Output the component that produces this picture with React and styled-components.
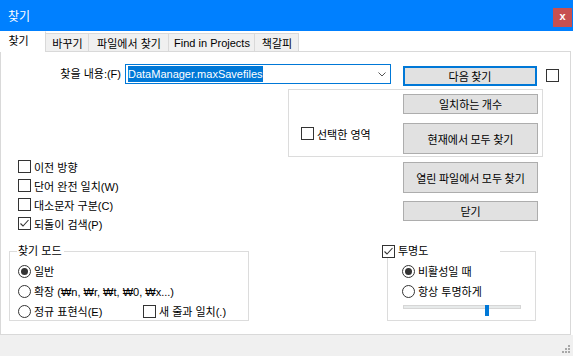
import React from 'react';
import styled, { createGlobalStyle } from 'styled-components';

const GlobalStyle = createGlobalStyle`
  html, body {
    margin: 0;
    padding: 0;
  }
  body {
    width: 573px;
    height: 356px;
    overflow: hidden;
    background: #f0f0f0;
    font-family: "Liberation Sans", "Noto Sans CJK KR", sans-serif;
    font-size: 11px;
    color: #000;
  }
  * {
    box-sizing: border-box;
  }
`;

const Window = styled.div`
  width: 573px;
  height: 356px;
  display: flex;
  flex-direction: column;
`;

const TitleBar = styled.div`
  height: 31px;
  flex: none;
  background: #0080ff;
  display: flex;
  align-items: flex-start;
  justify-content: space-between;
`;

const Title = styled.div`
  color: #fff;
  font-family: "Noto Sans CJK KR", sans-serif;
  font-size: 12px;
  line-height: 31px;
  padding-left: 8px;
`;

const CloseButton = styled.div`
  width: 19px;
  height: 19px;
  margin: 8px 1px 0 0;
  background: #c75050;
  color: #fff;
  font-weight: bold;
  font-size: 11px;
  line-height: 17px;
  text-align: center;
`;

const TabArea = styled.div`
  background: #fff;
  display: flex;
  flex-direction: column;
`;

const TabBar = styled.div`
  height: 20px;
  display: flex;
  align-items: flex-end;
`;

const Tab = styled.div`
  width: ${p => p.width}px;
  height: ${p => (p.active ? 21 : 18)}px;
  margin-bottom: ${p => (p.active ? -1 : 0)}px;
  position: relative;
  z-index: ${p => (p.active ? 1 : 0)};
  background: ${p => (p.active ? '#fff' : '#f0f0f0')};
  border-top: 1px solid ${p => (p.active ? '#fff' : '#d9d9d9')};
  border-right: 1px solid #d9d9d9;
  display: flex;
  align-items: center;
  justify-content: center;
  padding: ${p => (p.active ? '0 8px 4px 0' : '0 0 0 1px')};
  white-space: nowrap;
`;

const Panel = styled.div`
  width: 571px;
  height: 284px;
  background: #fff;
  border: 1px solid #d9d9d9;
  display: flex;
  flex-direction: column;
`;

const SearchRow = styled.div`
  display: flex;
  align-items: flex-start;
  margin-top: 12px;
`;

const FieldLabel = styled.div`
  width: 120px;
  line-height: 20px;
  text-align: right;
`;

const ComboBox = styled.div`
  width: 266px;
  height: 20px;
  margin-left: 4px;
  border: 1px solid #0078d7;
  display: flex;
  align-items: center;
`;

const Selection = styled.span`
  margin-left: 2px;
  background: #0078d7;
  color: #fff;
  line-height: 16px;
`;

const Chevron = styled.svg`
  margin-left: auto;
  margin-right: 4px;
`;

const Button = styled.div`
  width: ${p => p.width || 135}px;
  height: ${p => p.height || 20}px;
  margin-left: ${p => p.left || 0}px;
  margin-top: ${p => p.top || 0}px;
  background: #e1e1e1;
  border: ${p => (p.primary ? '2px solid #0078d7' : '1px solid #adadad')};
  display: flex;
  align-items: center;
  justify-content: center;
  font-family: "Noto Sans CJK KR", sans-serif;
`;

const BoxMark = styled.div`
  width: 13px;
  height: 13px;
  flex: none;
  background: #fff;
  border: 1px solid #333;
  border-radius: ${p => (p.round ? '50%' : '0')};
  margin-left: ${p => p.left || 0}px;
  margin-top: ${p => p.top || 0}px;
  display: flex;
  align-items: center;
  justify-content: center;
`;

const Dot = styled.div`
  width: 7px;
  height: 7px;
  border-radius: 50%;
  background: #333;
`;

const Option = styled.div`
  height: ${p => p.h || 19}px;
  display: flex;
  align-items: center;
  gap: 3px;
  white-space: nowrap;
`;

const OptionText = styled.span`
  width: ${p => (p.width ? `${p.width}px` : 'auto')};
`;

const SelectionGroup = styled.div`
  width: 255px;
  height: 68px;
  margin: 3px 0 0 287px;
  border: 1px solid #dcdcdc;
  display: flex;
`;

const SelectionLeft = styled.div`
  width: 114px;
  padding: 37px 0 0 12px;
`;

const ButtonColumn = styled.div`
  display: flex;
  flex-direction: column;
  gap: ${p => p.gap}px;
  padding-top: ${p => p.top}px;
`;

const MiddleRow = styled.div`
  display: flex;
`;

const OptionColumn = styled.div`
  width: 402px;
  padding-left: 17px;
`;

const BottomRow = styled.div`
  display: flex;
  margin-top: 18px;
`;

const GroupBox = styled.div`
  position: relative;
  width: ${p => p.width}px;
  height: 70px;
  margin-left: ${p => p.left}px;
  border: 1px solid #dcdcdc;
  padding: 9px 0 0 ${p => p.inset}px;
`;

const Caption = styled.div`
  position: absolute;
  top: -7px;
  left: ${p => p.left}px;
  width: ${p => (p.width ? `${p.width}px` : 'auto')};
  height: 13px;
  padding: 0 2px 0 ${p => (p.width ? 0 : 1)}px;
  background: #fff;
  display: flex;
  align-items: center;
  gap: 3px;
  line-height: 13px;
`;

const Slider = styled.div`
  position: relative;
  width: 118px;
  height: 11px;
  margin: 1px 0 0 1px;
`;

const Track = styled.div`
  margin-top: 4px;
  height: 4px;
  background: #e7eaea;
  border: 1px solid #d6d6d6;
`;

const Thumb = styled.div`
  position: absolute;
  top: 0;
  width: 4px;
  height: 11px;
  background: #0078d7;
`;

const Footer = styled.div`
  flex: 1;
  display: flex;
  justify-content: flex-end;
  align-items: flex-end;
  padding: 0 2px 2px 0;
`;

const Check = ({ checked, left, top }) => (
  <BoxMark left={left} top={top}>
    {checked && (
      <svg width="11" height="11" viewBox="0 0 11 11">
        <polyline points="1.5,5.5 4,8 9.5,2" fill="none" stroke="#333" strokeWidth="1.1" />
      </svg>
    )}
  </BoxMark>
);

const Radio = ({ checked }) => <BoxMark round>{checked && <Dot />}</BoxMark>;

const tabs = [
  { label: '찾기', width: 46, active: true },
  { label: '바꾸기', width: 43 },
  { label: '파일에서 찾기', width: 80 },
  { label: 'Find in Projects', width: 86 },
  { label: '책갈피', width: 44 },
];

const options = [
  { label: '이전 방향' },
  { label: '단어 완전 일치(W)' },
  { label: '대소문자 구분(C)' },
  { label: '되돌이 검색(P)', checked: true },
];

const Grip = () => (
  <svg width="10" height="10" viewBox="0 0 10 10">
    {[[7, 1], [4, 4], [7, 4], [1, 7], [4, 7], [7, 7]].map(([x, y]) => (
      <rect key={`${x}-${y}`} x={x} y={y} width="2" height="2" fill="#a8a8a8" />
    ))}
  </svg>
);

export default function App() {
  return (
    <Window>
      <GlobalStyle />
      <TitleBar>
        <Title>찾기</Title>
        <CloseButton>x</CloseButton>
      </TitleBar>
      <TabArea>
        <TabBar>
          {tabs.map(t => (
            <Tab key={t.label} width={t.width} active={t.active}>
              {t.label}
            </Tab>
          ))}
        </TabBar>
        <Panel>
          <SearchRow>
            <FieldLabel>찾을 내용:(F)</FieldLabel>
            <ComboBox>
              <Selection>DataManager.maxSavefiles</Selection>
              <Chevron width="8" height="5" viewBox="0 0 8 5">
                <polyline points="0.5,0.5 4,4 7.5,0.5" fill="none" stroke="#555" strokeWidth="1" />
              </Chevron>
            </ComboBox>
            <Button primary width={134} left={12} top={2}>다음 찾기</Button>
            <Check left={9} top={5} />
          </SearchRow>

          <SelectionGroup>
            <SelectionLeft>
              <Option h={13}>
                <Check />
                <span>선택한 영역</span>
              </Option>
            </SelectionLeft>
            <ButtonColumn gap={9} top={4}>
              <Button>일치하는 개수</Button>
              <Button height={31}>현재에서 모두 찾기</Button>
            </ButtonColumn>
          </SelectionGroup>

          <MiddleRow>
            <OptionColumn>
              {options.map(o => (
                <Option key={o.label}>
                  <Check checked={o.checked} />
                  <span>{o.label}</span>
                </Option>
              ))}
            </OptionColumn>
            <ButtonColumn gap={8} top={5}>
              <Button height={31}>열린 파일에서 모두 찾기</Button>
              <Button>닫기</Button>
            </ButtonColumn>
          </MiddleRow>

          <BottomRow>
            <GroupBox width={240} left={8} inset={8}>
              <Caption left={7}>찾기 모드</Caption>
              <Option h={20}>
                <Radio checked />
                <span>일반</span>
              </Option>
              <Option h={20}>
                <Radio />
                <span>확장 (₩n, ₩r, ₩t, ₩0, ₩x...)</span>
              </Option>
              <Option h={20}>
                <Radio />
                <OptionText width={106}>정규 표현식(E)</OptionText>
                <Check />
                <span>새 줄과 일치(.)</span>
              </Option>
            </GroupBox>

            <GroupBox width={149} left={138} inset={14}>
              <Caption left={-6} width={118}>
                <Check checked />
                <span>투명도</span>
              </Caption>
              <Option h={20}>
                <Radio checked />
                <span>비활성일 때</span>
              </Option>
              <Option h={20}>
                <Radio />
                <span>항상 투명하게</span>
              </Option>
              <Slider>
                <Track />
                <Thumb style={{ left: 82 }} />
              </Slider>
            </GroupBox>
          </BottomRow>
        </Panel>
      </TabArea>
      <Footer>
        <Grip />
      </Footer>
    </Window>
  );
}
